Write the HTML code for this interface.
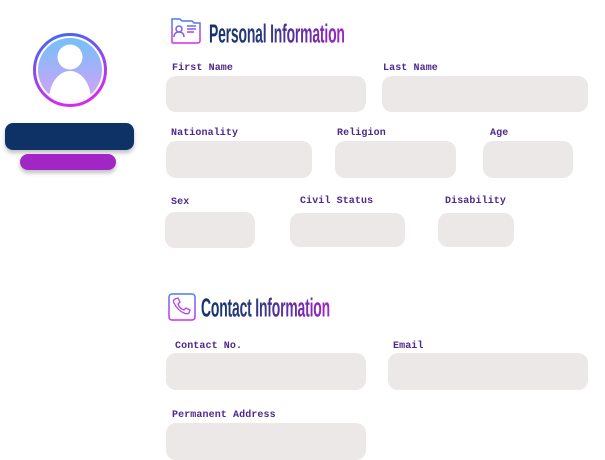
<!DOCTYPE html>
<html><head><meta charset="utf-8"><style>
*{margin:0;padding:0;box-sizing:border-box}
body{width:605px;height:460px;background:#fff;position:relative;overflow:hidden;font-family:"Liberation Mono",monospace}
.b{position:absolute;background:#ece8e8;border-radius:10px}
.l{position:absolute;font-size:10px;font-weight:bold;color:#4b2a8e;letter-spacing:0.1px}
.t{position:absolute;font-family:"Liberation Sans",sans-serif;font-weight:bold;font-size:24px;transform:scale(0.58,1.08);transform-origin:left top;letter-spacing:-0.3px;background:linear-gradient(90deg,#13336a 0%,#2c3a80 40%,#a024c8 100%);-webkit-background-clip:text;background-clip:text;color:transparent;white-space:nowrap}
</style></head><body>
<svg style="position:absolute;left:30px;top:30px" width="80" height="80" viewBox="0 0 80 80">
<defs><linearGradient id="r" x1="0" y1="0" x2="0.3" y2="1"><stop offset="0" stop-color="#3a6cf5"/><stop offset="1" stop-color="#d22cf0"/></linearGradient>
<linearGradient id="f" x1="0" y1="0" x2="0" y2="1"><stop offset="0" stop-color="#74c0fb"/><stop offset="1" stop-color="#d9a0f5"/></linearGradient>
<clipPath id="c"><circle cx="40" cy="40" r="32"/></clipPath></defs>
<circle cx="40" cy="40" r="35.5" fill="none" stroke="url(#r)" stroke-width="3"/>
<circle cx="40" cy="40" r="32" fill="url(#f)"/>
<g clip-path="url(#c)" fill="#fff"><circle cx="40" cy="27" r="12.5"/><ellipse cx="40" cy="70" rx="21" ry="29"/></g>
</svg>
<div style="position:absolute;left:5px;top:123px;width:129px;height:27px;background:#0f3266;border-radius:8px;box-shadow:0 3px 4px rgba(0,0,0,.25)"></div>
<div style="position:absolute;left:20px;top:154px;width:96px;height:16px;background:#a126c5;border-radius:8px;box-shadow:0 3px 4px rgba(0,0,0,.25)"></div>

<svg style="position:absolute;left:170px;top:16px" width="32" height="29" viewBox="0 0 32 29">
<defs><linearGradient id="g1" x1="0" y1="0" x2="0" y2="1"><stop offset="0" stop-color="#4a7cf5"/><stop offset="1" stop-color="#d22cf0"/></linearGradient></defs>
<g fill="none" stroke="url(#g1)" stroke-width="1.5"><path d="M2 6V3h8l2 2h10l2 2h6v18c0 1-1 2-2 2H3c-1 0-1-1-1-2V6z"/><path d="M2 22h28"/><circle cx="9" cy="13" r="3"/><path d="M4 21c0-4 3-5 5-5s5 1 5 5"/><path d="M17 10h9M17 13h9M17 16h7"/></g>
</svg>
<div class="t" style="left:209px;top:20px">Personal Information</div>

<div class="l" style="left:172px;top:63px">First Name</div>
<div class="b" style="left:166px;top:76px;width:200px;height:36px"></div>
<div class="l" style="left:383px;top:63px">Last Name</div>
<div class="b" style="left:382px;top:76px;width:206px;height:36px"></div>

<div class="l" style="left:171px;top:128px">Nationality</div>
<div class="b" style="left:166px;top:141px;width:146px;height:37px"></div>
<div class="l" style="left:337px;top:128px">Religion</div>
<div class="b" style="left:335px;top:141px;width:121px;height:37px"></div>
<div class="l" style="left:490px;top:128px">Age</div>
<div class="b" style="left:483px;top:141px;width:90px;height:37px"></div>

<div class="l" style="left:171px;top:197px">Sex</div>
<div class="b" style="left:165px;top:212px;width:90px;height:36px"></div>
<div class="l" style="left:300px;top:196px">Civil Status</div>
<div class="b" style="left:290px;top:213px;width:115px;height:34px"></div>
<div class="l" style="left:445px;top:196px">Disability</div>
<div class="b" style="left:438px;top:213px;width:76px;height:34px"></div>

<svg style="position:absolute;left:168px;top:293px" width="28" height="28" viewBox="0 0 28 28">
<defs><linearGradient id="g2" x1="0" y1="0" x2="0" y2="1"><stop offset="0" stop-color="#4a7cf5"/><stop offset="1" stop-color="#d22cf0"/></linearGradient></defs>
<rect x="1" y="1" width="26" height="26" rx="3" fill="none" stroke="url(#g2)" stroke-width="1.5"/>
<path d="M7 6l3-1 2 4-2 2c1 3 3 5 6 6l2-2 4 2-1 3c-1 1-3 1-5 0-5-2-8-6-10-10-1-2-1-3 1-4z" fill="none" stroke="#b045e8" stroke-width="1.3"/>
</svg>
<div class="t" style="left:201px;top:294px">Contact Information</div>

<div class="l" style="left:175px;top:341px">Contact No.</div>
<div class="b" style="left:166px;top:353px;width:200px;height:37px"></div>
<div class="l" style="left:393px;top:341px">Email</div>
<div class="b" style="left:388px;top:353px;width:200px;height:37px"></div>

<div class="l" style="left:172px;top:410px">Permanent Address</div>
<div class="b" style="left:166px;top:423px;width:200px;height:37px"></div>
</body></html>
